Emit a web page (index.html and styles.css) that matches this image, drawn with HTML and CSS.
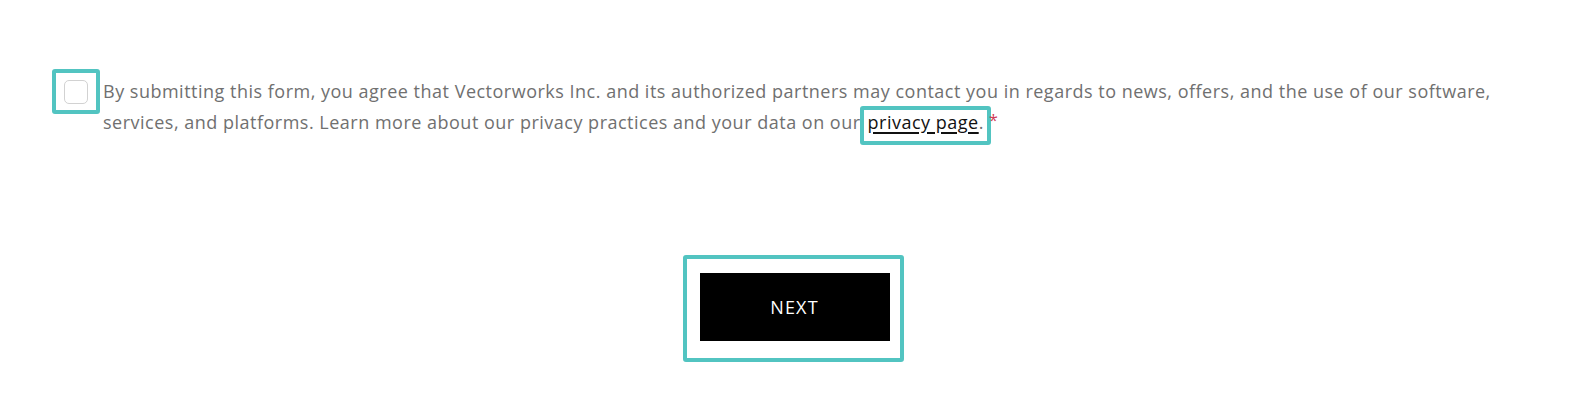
FILE: index.html
```html
<!DOCTYPE html>
<html lang="en">
<head>
<meta charset="utf-8">
<title>Consent</title>
<link rel="stylesheet" href="styles.css">
</head>
<body>
<form class="form">
  <div class="consent">
    <div class="hl hl-check">
      <span class="checkbox"></span>
    </div>
    <p class="consent-text">By submitting this form, you agree that Vectorworks Inc. and its authorized partners may contact you in regards to news, offers, and the use of our software, services, and platforms. Learn more about our privacy practices and your data on our<span class="hl hl-link"><a class="link" href="#">privacy page</a>.</span><span class="req">*</span></p>
  </div>
  <div class="actions">
    <div class="hl hl-button">
      <button type="button" class="next">NEXT</button>
    </div>
  </div>
</form>
</body>
</html>
```

FILE: styles.css
```css
html, body {
  margin: 0;
  padding: 0;
  background: #ffffff;
}

body {
  font-family: "Open Sans", Roboto, "Liberation Sans", sans-serif;
  width: 1592px;
  height: 412px;
  overflow: hidden;
}

.form {
  padding: 69px 52px 0 52px;
}

.hl {
  border: 4px solid #52c4c1;
  border-radius: 3px;
  box-sizing: border-box;
}

.consent {
  display: flex;
  align-items: flex-start;
}

.hl-check {
  flex: none;
  width: 48px;
  height: 45px;
  display: flex;
  align-items: center;
  justify-content: center;
}

.checkbox {
  display: block;
  width: 24px;
  height: 24px;
  box-sizing: border-box;
  border: 1.5px solid #d2d2d2;
  border-radius: 5px;
  background: #fff;
  margin-left: -1px;
}

.consent-text {
  margin: 7px 0 0 3px;
  font-size: 18px;
  line-height: 31px;
  letter-spacing: 0.5px;
  color: #707070;
}

.hl-link {
  display: inline-block;
  line-height: 22px;
  padding: 1px 3px 8px 4px;
  margin: -4px 0 -9px -1px;
  vertical-align: baseline;
}

.link {
  color: #111111;
  text-decoration: underline;
  text-underline-offset: 3px;
  text-decoration-thickness: 1.5px;
}

.req {
  color: #cf3a54;
  margin-left: -2px;
  font-size: 16px;
  line-height: 0;
  vertical-align: 3px;
}

.actions {
  display: flex;
  justify-content: center;
  margin-top: 117px;
}

.hl-button {
  padding: 14px 10px 17px 13px;
  margin-right: 6px;
}

.next {
  display: block;
  width: 190px;
  height: 68px;
  border: 0;
  border-radius: 0;
  background: #000;
  color: #fff;
  font-family: "Open Sans", Roboto, "Liberation Sans", sans-serif;
  font-size: 18px;
  letter-spacing: 1.2px;
  font-weight: 500;
  cursor: pointer;
}
```
